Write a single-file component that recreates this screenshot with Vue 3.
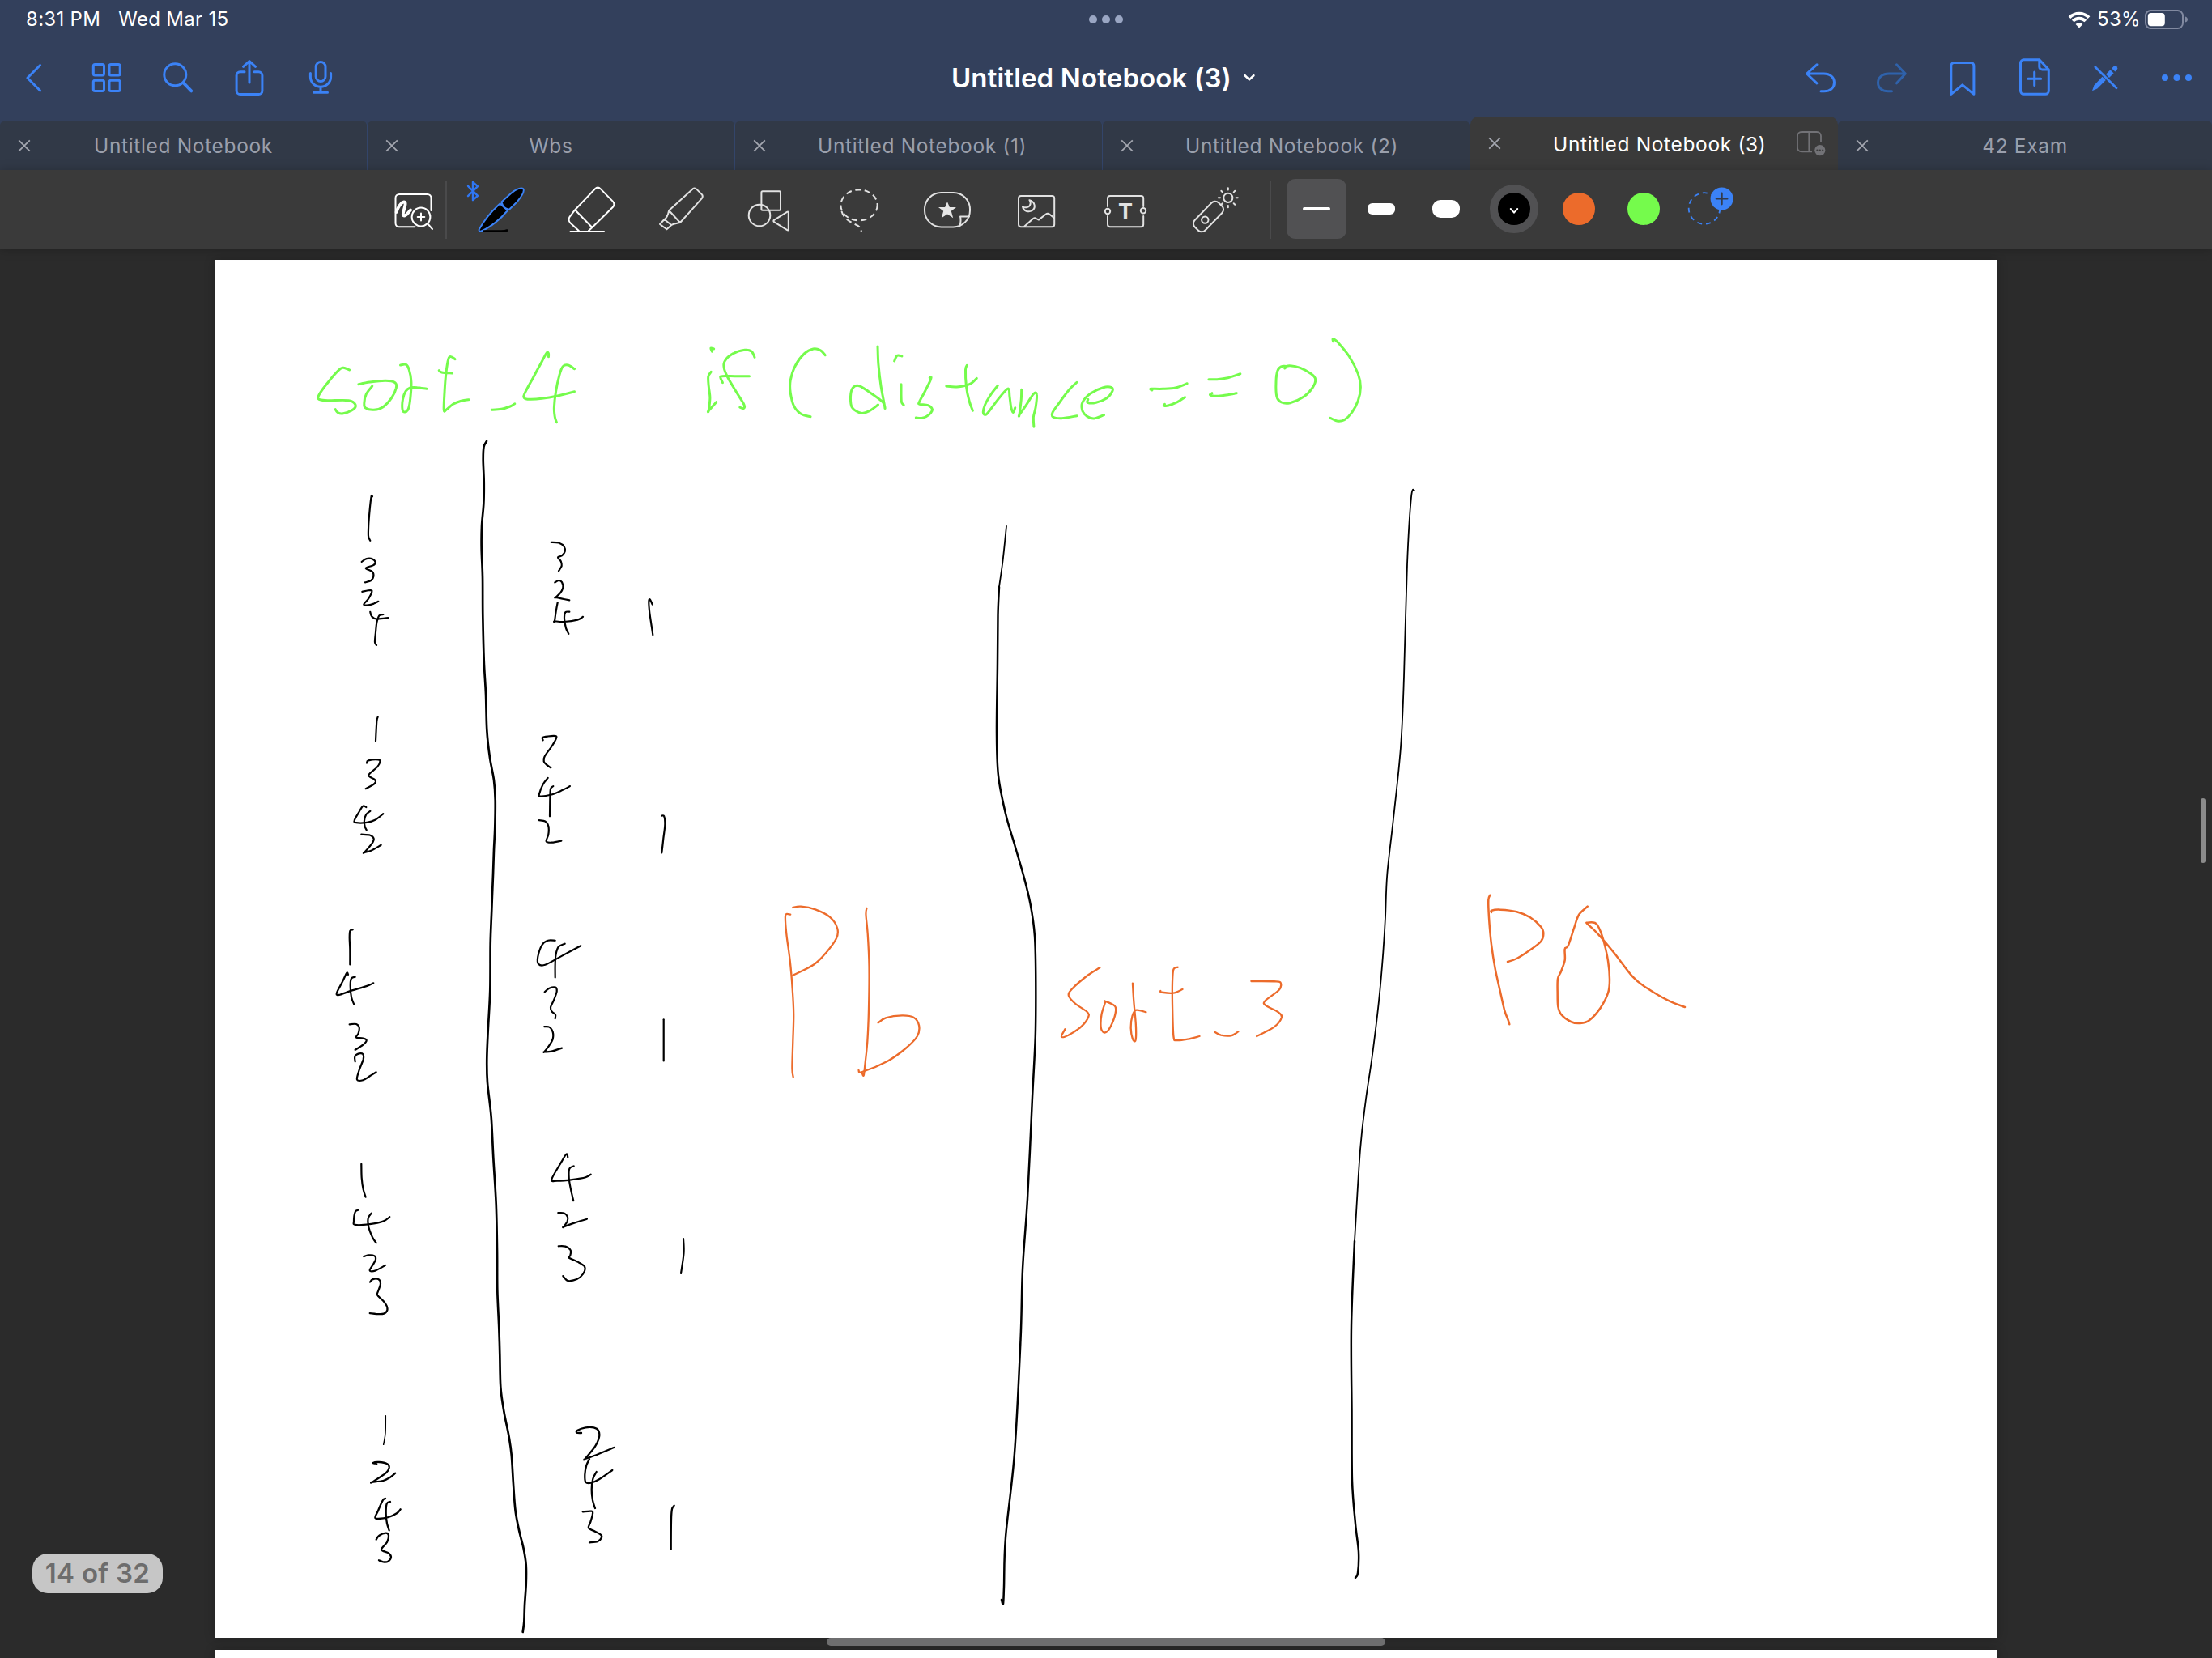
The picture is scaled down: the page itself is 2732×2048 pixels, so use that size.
<script setup>
const tabs = [
  { title: 'Untitled Notebook' },
  { title: 'Wbs' },
  { title: 'Untitled Notebook (1)' },
  { title: 'Untitled Notebook (2)' },
  { title: 'Untitled Notebook (3)', active: true },
  { title: '42 Exam' },
]

const GREEN = '#75fb4c'
const ORANGE = '#ec6b2b'
const BLACK = '#000000'

// Each ink group has its own origin and pen resolution (sx, sy units per page pixel).
const ink = [
  {
    x: 370, y: 400, sx: 2.306, sy: 3, color: GREEN, width: 3,
    strokes: [
      '142,171 125,163 113,170 82,215 56,262 55,280 80,284 140,284 159,300 152,318 122,333 108,328 102,317',
      '168,224 200,216 245,211 272,218 275,238 262,275 238,308 212,319 188,312 184,295 190,260 207,231',
      '287,153 303,151 312,170 318,215 316,270 310,315 300,327 293,318 294,280 302,250 315,237 335,236 362,241',
      '443,131 432,122 424,130 417,185 413,250 411,319 418,318 437,298 460,286 482,281',
      '397,173 405,180 435,183',
      '547,319 575,316 600,306 613,296',
      '709,122 709,110 704,107 690,140 665,200 641,258 640,275 655,280 690,277 735,267 783,251',
      '783,167 765,153 750,158 740,190 730,250 725,310 727,345 732,365',
      '1180,93 1171,90 1175,103',
      '1172,178 1164,195 1165,230 1169,275 1165,322 1165,322 1187,290',
      '1296,124 1287,102 1268,97 1235,110 1211,138 1209,165 1220,200 1245,255 1266,300 1264,314 1254,309',
      '1205,218 1199,200 1203,194 1240,194 1281,194',
      '1497,116 1483,98 1463,93 1438,110 1412,155 1398,210 1398,255 1408,305 1428,334 1455,344',
    ],
  },
  {
    x: 1030, y: 400, sx: 2.24, sy: 3, color: GREEN, width: 3,
    strokes: [
      '121,84 123,150 130,230 141,311 135,290 100,255 70,230 52,238 46,270 50,310 75,331 98,323 122,300',
      '167,138 175,118 188,120',
      '186,224 186,260 187,290 193,301',
      '265,200 269,197 266,212 250,255 236,290 237,298 260,302 272,318 262,338 245,349 227,348',
      '368,154 364,170 366,230 374,285 384,322',
      '311,231 340,234 375,224 395,202',
      '453,229 435,260 418,300 413,330 422,335 440,305 460,270 482,240 486,270 490,310 496,329 501,311',
      '519,244 518,280 513,337 513,337 530,305 552,260 561,262 558,310 552,345 553,382',
      '672,217 650,245 622,295 605,328 606,345 630,350 672,341',
      '703,280 702,292 725,292 755,275 770,250 768,236 745,236 710,258 688,290 687,320 700,343 720,351 747,338',
      '880,246 877,241 910,241 945,237 977,221',
      '915,298 913,303 925,303 950,290 971,272',
      '1037,206 1060,206 1090,200 1124,185',
      '1046,257 1041,264 1060,268 1085,264 1114,257',
      '1247,165 1252,158 1238,158 1227,175 1223,215 1225,270 1238,291 1262,293 1300,270 1325,235 1332,205 1320,185 1290,163 1262,155 1250,158',
      '1381,65 1381,56 1395,70 1425,120 1450,185 1457,235 1450,285 1432,330 1412,356 1392,360 1373,349',
    ],
  },
  {
    x: 380, y: 540, sx: 3, sy: 2.904, color: BLACK, width: 2.2,
    strokes: [
      '240,213 236,211 231,250 226,310 225,355 232,371',
      '200,447 218,436 240,437 251,450 242,460 215,470 240,483 244,500 235,514 213,521',
      '202,554 232,549 238,555 225,580 208,600 225,602 245,597 262,589',
      '232,627 237,642 255,652 298,648',
      '280,636 265,640 256,665 252,700 249,735 255,746',
      '902,377 930,379 950,392 953,410 942,425 927,431 938,445 941,462 930,480',
      '916,521 930,514 942,520 946,540 935,560 918,575 918,575 940,579 970,585',
      '926,593 920,625 915,660 915,660 950,662 1000,655 1020,644',
      '970,626 955,628 951,650 957,685 967,705',
      '1277,600 1268,582 1264,590 1267,630 1279,709',
      '260,1004 256,1020 252,1090',
      '219,1169 225,1160 262,1157 268,1165 258,1183 226,1212 248,1228 252,1237 240,1248 215,1261',
      '217,1327 205,1323 190,1345 173,1375 180,1383 220,1382 250,1373 280,1351',
      '232,1341 217,1353 210,1375 212,1397 218,1409',
      '199,1425 232,1428 245,1440 238,1458 210,1490 210,1490 235,1483 272,1463',
      '872,1087 870,1077 890,1073 918,1072 921,1080 905,1108 878,1145 875,1163 885,1175 901,1186',
      '890,1222 872,1245 858,1280 862,1288 900,1283 940,1268 972,1252',
      '910,1252 900,1262 898,1300 897,1360',
      '857,1374 880,1378 892,1395 892,1425 884,1450 905,1454 940,1448',
      '1312,1358 1321,1360 1324,1390 1318,1440 1312,1491',
    ],
  },
  {
    x: 380, y: 1080, sx: 3, sy: 2.8, color: BLACK, width: 2.2,
    strokes: [
      '167,191 157,196 155,220 157,260 157,312',
      '150,347 145,341 130,370 107,412 120,416 160,403 220,386 244,376',
      '176,355 162,360 158,385 162,425 172,450',
      '155,519 180,518 191,530 188,550 180,564 205,567 218,574 205,590 176,607',
      '176,648 175,630 190,620 205,622 206,640 190,680 183,710 205,712 230,698 254,684',
      '917,229 890,229 868,245 853,285 855,310 880,313 940,283 1012,247',
      '953,240 930,250 920,275 917,310 917,357',
      '878,407 895,394 918,391 923,405 912,435 900,460 905,475 918,485 917,499',
      '877,527 895,528 908,545 908,570 895,592 877,614 877,614 900,613 942,601',
      '1319,502 1319,645',
      '199,1002 200,1050 206,1090 215,1116',
      '188,1161 176,1168 171,1200 176,1212 230,1210 280,1200 304,1185',
      '236,1172 224,1190 226,1220 240,1255 254,1275',
      '208,1322 225,1317 248,1320 252,1332 242,1350 230,1370 250,1371 288,1352',
      '231,1410 240,1401 262,1400 270,1415 262,1440 258,1455 280,1475 295,1498 290,1515 270,1521 230,1518',
      '964,980 959,967 940,995 904,1055 925,1060 980,1056 1030,1048 1049,1038',
      '986,1009 970,1018 968,1050 975,1090 985,1129',
      '928,1171 950,1172 963,1185 962,1200 949,1219 949,1219 990,1205 1035,1192',
      '929,1286 955,1287 974,1300 973,1318 968,1326 1000,1340 1025,1355 1026,1372 1010,1393 985,1404 962,1405 946,1389',
    ],
  },
  {
    x: 380, y: 1640, sx: 3, sy: 3, color: BLACK, width: 2.3,
    strokes: [
      '256,504 242,501 265,498 295,505 302,518 290,538 240,572 240,572 280,567 305,555 325,539',
      '288,633 278,640 260,680 250,703 262,708 300,702 330,688 344,673',
      '306,645 293,652 290,690 294,725 302,751',
      '254,785 265,770 290,761 300,770 294,795 273,822 300,835 309,850 298,866 280,868 264,862',
      '1014,390 997,389 1000,380 1030,370 1060,370 1077,380 1080,405 1065,440 1028,486 1028,486 1060,475 1135,444',
      '1044,487 1033,510 1027,545 1030,572 1050,575 1080,562 1129,528',
      '1070,534 1057,560 1052,600 1056,640 1065,669',
      '1019,682 1052,680 1056,690 1048,720 1041,742 1065,755 1086,767 1089,778 1075,792 1044,796',
      '1358,659 1350,672 1347,710 1346,821',
    ],
  },
  {
    x: 380, y: 1640, sx: 3, sy: 3, color: BLACK, width: 1.5,
    strokes: ['289,326 288,390 281,433'],
  },
  {
    x: 940, y: 1080, sx: 2.24, sy: 3, color: ORANGE, width: 2.3,
    strokes: [
      '81,149 70,147 67,160 70,220 80,320 87,430 90,520 88,620 86,720 89,751',
      '88,123 110,119 150,130 190,158 211,200 208,238 180,290 145,335 88,374',
      '292,126 290,150 295,220 299,340 298,500 294,620 288,700 284,745 280,738',
      '324,550 345,532 390,523 422,530 437,560 432,600 400,645 350,692 280,732 270,726',
      '937,346 900,378 860,425 851,450 870,480 902,510 905,530 885,565 850,596 831,602 841,574',
      '950,469 978,487 981,510 972,550 958,582 946,584 940,565 942,520 952,475',
      '1028,404 1031,470 1037,560 1036,615 1028,610 1023,570 1027,525 1038,503 1065,511',
      '1153,344 1141,352 1138,400 1138,480 1141,600 1150,615 1180,611 1213,600',
      '1105,432 1108,437 1140,440 1166,426',
      '1256,585 1272,596 1300,598 1320,583',
      '1356,396 1425,397 1438,405 1432,430 1395,468 1395,485 1430,510 1440,530 1420,565 1371,600',
    ],
  },
  {
    x: 1640, y: 1080, sx: 3, sy: 3, color: ORANGE, width: 2.5,
    strokes: [
      '601,77 595,95 597,160 606,260 620,350 640,440 655,505 668,540 673,556',
      '606,141 607,134 640,131 700,139 750,160 790,195 799,220 790,248 750,280 700,312 666,324',
      '962,119 930,150 912,200 890,265 878,276 878,318 864,360 852,387 851,440 853,490 865,520 900,546 935,552 970,540 1010,495 1038,440 1044,390 1038,320 1020,240 1003,195 990,180 962,179 962,184 1000,220 1060,290 1130,380 1180,420 1260,467 1323,492',
    ],
  },
  {
    x: 0, y: 0, sx: 1, sy: 1, color: BLACK, width: 2.2,
    strokes: ['844,1530 844.5,1548 841,1573'],
  },
  {
    x: 0, y: 0, sx: 1, sy: 1, color: BLACK, width: 2.7,
    strokes: [
      '601,545 597.5,552 596.7,567.5 597.7,595 597.3,622.6 595,650 594.7,678 596,712 596.3,760 597.7,815.5 600,857 601.3,901.6 605,936 610,963.6 611.7,987.7 611.3,1022 610,1050 609,1080 607.3,1123 605.7,1166 605.3,1223 602.7,1273 601.3,1308.6 602,1337 606.7,1380 609.3,1430 612.7,1487 614,1544 614.3,1594 616.3,1640 617.3,1673 618.3,1713 622.3,1743 628.3,1773 631.7,1797 634,1833 636.7,1867 641.7,1893 646.7,1913 649.7,1933 649.7,1957 648,1983 647.3,2003 645.7,2016',
    ],
  },
  {
    x: 0, y: 0, sx: 1, sy: 1, color: BLACK, width: 2.5,
    strokes: [
      '1234,725 1232.5,760 1232,819 1231,906 1233,958 1242,1005 1253,1043 1263.7,1080 1272.6,1116.7 1278,1156.7 1279.3,1213 1278.8,1280 1274.8,1360 1269,1481 1263,1568 1260.5,1655 1253,1795 1242,1899 1240,1960 1239,1981 1237,1976',
      '1673,1533 1669,1638 1669.5,1742 1670,1829 1674,1882 1678,1917 1677,1943 1674,1949',
    ],
  },
  {
    x: 0, y: 0, sx: 1, sy: 1, color: BLACK, width: 1.8,
    strokes: [
      '1243,650 1241,670 1238,697 1234,725',
      '1747,606 1743,614 1738,697 1734,836 1730,923 1721,1011 1713.3,1080 1711,1133 1708.3,1176.7 1703,1236.7 1695,1303 1686.7,1360 1680,1420 1673,1533',
    ],
  },
]

// Smooths a list of sampled pen positions into a cubic curve.
function smooth(group, stroke) {
  const p = stroke.split(' ').map((pair) => {
    const [px, py] = pair.split(',').map(Number)
    return [group.x + px / group.sx, group.y + py / group.sy]
  })
  let d = `M${p[0][0].toFixed(1)} ${p[0][1].toFixed(1)}`
  for (let i = 0; i < p.length - 1; i++) {
    const a = p[i - 1] || p[i]
    const b = p[i]
    const c = p[i + 1]
    const e = p[i + 2] || c
    const pts = [
      b[0] + (c[0] - a[0]) / 6, b[1] + (c[1] - a[1]) / 6,
      c[0] - (e[0] - b[0]) / 6, c[1] - (e[1] - b[1]) / 6,
      c[0], c[1],
    ]
    d += ' C' + pts.map((n) => n.toFixed(1)).join(' ')
  }
  return d
}

const rays = [0, 45, 90, 135, 180, 225, 270, 315]
</script>

<template>
  <div class="app">
    <header class="top">
      <div class="status">
        <div class="clock"><span class="time">8:31 PM</span><span class="date">Wed Mar 15</span></div>
        <div class="multitask"><i></i><i></i><i></i></div>
        <div class="power">
          <svg class="wifi" viewBox="0 0 28 21">
            <path d="M2 7.6A17 17 0 0 1 26 7.6" />
            <path d="M6.2 12A11 11 0 0 1 21.8 12" />
            <path class="solid" d="M14 20.4L9.6 15.9A6.2 6.2 0 0 1 18.4 15.9Z" />
          </svg>
          <span class="pct">53%</span>
          <svg class="battery" viewBox="0 0 54 24">
            <rect x="1" y="1" width="46" height="22" rx="6.5" fill="none" stroke="#8189a0" stroke-width="2" />
            <rect x="3.8" y="4" width="21" height="16.3" rx="4" fill="#fff" />
            <path d="M50 8.5V15.5C52 15 53 13.5 53 12S52 9 50 8.5Z" fill="#8189a0" />
          </svg>
        </div>
      </div>

      <div class="nav">
        <div class="group">
          <svg viewBox="0 52 88 88"><path d="M49.6 80.5L33.9 96.3L49.6 112" /></svg>
          <svg viewBox="88 52 88 88">
            <rect x="115.3" y="79.5" width="13.2" height="13.4" rx="2" />
            <rect x="135" y="79.5" width="13.2" height="13.4" rx="2" />
            <rect x="115.3" y="99.2" width="13.2" height="13.4" rx="2" />
            <rect x="135" y="99.2" width="13.2" height="13.4" rx="2" />
          </svg>
          <svg viewBox="176 52 88 88">
            <circle cx="216.3" cy="92.3" r="13.5" /><path class="bold" d="M226.6 102.4L236.3 112.4" />
          </svg>
          <svg viewBox="264 52 88 88">
            <path d="M302 88.8H296.5a4.4 4.4 0 0 0-4.4 4.4V112.2a4.4 4.4 0 0 0 4.4 4.4H319.5a4.4 4.4 0 0 0 4.4-4.4V93.2a4.4 4.4 0 0 0-4.4-4.4H314" />
            <path d="M308 102V76.2M300.5 82.3L308 75.5L315.5 82.3" />
          </svg>
          <svg viewBox="352 52 88 88">
            <rect x="390.2" y="76.5" width="11.8" height="24" rx="5.9" />
            <path d="M383.4 90.5V95a12.6 12.3 0 0 0 25.2 0V90.5M396 107.5V114M387.5 114.3H404.5" />
          </svg>
        </div>
        <div class="title">
          <span>Untitled Notebook (3)</span>
          <svg viewBox="0 0 16 10"><path d="M2.6 2.2L8 7.4L13.4 2.2" /></svg>
        </div>
        <div class="group">
          <svg viewBox="2204 52 88 88">
            <path d="M2244 79.8L2231.5 91L2244 102.8M2232 91H2252.5C2260.5 91 2265.5 95.5 2265.5 102S2260.5 112.8 2253 112.8H2249" />
          </svg>
          <svg class="dim" viewBox="2292 52 88 88">
            <path d="M2342.5 79.8L2353.3 91L2342.5 102.8M2353 91H2333C2325 91 2319.5 95.5 2319.5 102S2324.5 112.8 2332 112.8H2336.5" />
          </svg>
          <svg viewBox="2380 52 88 88">
            <path d="M2409.8 116.3V81a3.6 3.6 0 0 1 3.6-3.6H2434.3a3.6 3.6 0 0 1 3.6 3.6V116.3L2423.8 104.8Z" />
          </svg>
          <svg viewBox="2468 52 88 88">
            <path d="M2518.8 73.8H2499.5a4 4 0 0 0-4 4V112.3a4 4 0 0 0 4 4H2526.3a4 4 0 0 0 4-4V86ZM2518.8 74V82.5a3.6 3.6 0 0 0 3.6 3.6H2530M2512.7 89V105.5M2504.7 97.2H2520.7" />
          </svg>
          <svg viewBox="2556 52 88 88">
            <path class="thin" d="M2587.8 82.8L2614 108.8" />
            <path class="solid" d="M2584 112.2L2586.3 105.6L2596.5 94.8L2600.8 99.1L2590.3 109.6Z" />
            <path class="solid" d="M2601 91.8L2606.4 86.2L2610.6 90.4L2605 96Z" />
            <path class="solid" d="M2608.2 84.4L2610.5 82A3 3 0 0 1 2614.7 86.2L2612.4 88.6Z" />
          </svg>
          <svg viewBox="2644 52 88 88">
            <g class="solid"><circle cx="2674" cy="96" r="4" /><circle cx="2688.5" cy="96" r="4" /><circle cx="2703" cy="96" r="4" /></g>
          </svg>
        </div>
      </div>

      <div class="tabs">
        <div v-for="tab in tabs" :key="tab.title" class="tab" :class="{ active: tab.active }">
          <svg class="close" viewBox="0 0 16 16"><path d="M1.2 1.4L14.8 14.6M14.8 1.4L1.2 14.6" /></svg>
          <span class="label">{{ tab.title }}</span>
          <svg v-if="tab.active" class="split" viewBox="0 0 36 31">
            <path d="M19 25.3H6a5 5 0 0 1-5-5V6a5 5 0 0 1 5-5H25a5 5 0 0 1 5 5V13.5M15.3 1V25.3" fill="none" stroke="#727276" stroke-width="1.8" />
            <circle cx="28.8" cy="23.6" r="6.6" fill="#727276" />
            <g fill="#3a3a3a"><circle cx="25.4" cy="23.6" r="1.1" /><circle cx="28.8" cy="23.6" r="1.1" /><circle cx="32.2" cy="23.6" r="1.1" /></g>
          </svg>
        </div>
      </div>
    </header>

    <div class="toolbar">
      <svg class="zoom" viewBox="455 210 95 97">
        <path d="M512.5 280.3H493a4.5 4.5 0 0 1-4.5-4.5V244.5a4.5 4.5 0 0 1 4.5-4.5H528a4.5 4.5 0 0 1 4.5 4.5V260" />
        <path class="scribble" d="M489.6 262C491.5 256 495.5 249.5 499 249.3C503.5 249.5 497 262 497.8 265.5C499 269 503 264 507 259.5" />
        <circle cx="520" cy="268" r="11.4" /><path d="M528.3 276.3L534 283M515.7 268H524.3M520 263.6V272.4" />
      </svg>
      <div class="rule first"></div>
      <svg viewBox="565 210 110 97">
        <path class="bt" d="M578 229.8L590 241.8L584 247.2V224.8L590 230.2L578 242.2" />
        <path class="pen" d="M617.5 251.5C607 261 598 272 591.8 283.2C591 285.8 593 286.3 595.5 285C605 281 618 271 627 260Z" />
        <path class="pen" d="M619.4 249.5L631 239C638 233 644 231.4 646.3 233.2C648 236 644 243 638.5 249.5L629 258.7C623.5 258.2 620.5 254 619.4 249.5Z" />
        <path class="penline" d="M597.5 285.7H619Q624 285.7 626.3 284.6" />
      </svg>
      <svg class="white" viewBox="675 210 110 97">
        <path d="M710.2 259.2L735 233.2Q738.4 230 741.8 233.4L756.8 248.6Q760 252.2 757 255.8L731.4 281ZM710.2 259.2L703.6 267.8Q701.3 271.5 704 275L714.8 285M731.4 281L727 285M704.5 286H746" />
      </svg>
      <svg viewBox="785 210 110 97">
        <path d="M826.2 260L855.5 233.4Q858 231.4 860.5 233.9L867 240.4Q868.6 242.6 866.8 245.2L840 275ZM826.2 260C825.2 265 824 269 820.5 271L815 277L823.5 283.3L829.3 278C832 276 836 276 840 275M820.5 271L829.3 278" />
      </svg>
      <svg viewBox="895 210 110 97">
        <rect x="940.4" y="236.2" width="23.6" height="23.6" rx="1.5" /><circle cx="938" cy="266" r="13.3" />
        <path d="M955.6 273Q955 272.5 956 271.8L972 261.8Q973.8 261 973.8 262.6V283.4Q973.8 285 972.2 284.2L956 274.2Q955 273.5 955.6 273Z" />
      </svg>
      <svg viewBox="1005 210 110 97">
        <g class="dash">
          <ellipse cx="1061" cy="253.4" rx="22.6" ry="19" />
          <path d="M1039.5 261C1042 270 1050 274 1057 277.5C1061.5 279.5 1063.5 282 1063.8 286" />
        </g>
      </svg>
      <svg viewBox="1115 210 110 97">
        <rect x="1142" y="238" width="56" height="42.4" rx="20.5" />
        <path d="M1185.5 279C1186.5 275 1187 271 1186 267.4H1197" />
        <path class="fill" d="M1170 249.3L1172.9 256H1181L1174.8 260.8L1177.2 269.2L1170 264.5L1162.8 269.2L1165.2 260.8L1159 256H1167.1Z" />
      </svg>
      <svg viewBox="1225 210 110 97">
        <rect x="1258" y="242" width="44.2" height="38.2" rx="3" />
        <path d="M1271.5 247.2C1278.5 249 1279.5 257 1275 260C1270 263 1264 260.5 1263 255.3C1266 257 1270 256.5 1271.7 254C1273 252 1273 249.5 1271.5 247.2ZM1265.4 279.4L1276 270Q1278 268.6 1280 270L1282.8 271.6L1291.5 264.8Q1294 262.8 1296.4 264.8L1302 269.3" />
      </svg>
      <svg viewBox="1335 210 110 97">
        <path d="M1368 255V245a3 3 0 0 1 3-3H1409.2a3 3 0 0 1 3 3V255M1368 267V277.2a3 3 0 0 0 3 3H1409.2a3 3 0 0 0 3-3V267" />
        <circle cx="1368" cy="261" r="3.2" /><circle cx="1412" cy="260.2" r="3.2" />
        <text x="1390" y="270.8" text-anchor="middle">T</text>
      </svg>
      <svg viewBox="1445 210 110 97">
        <rect x="-21" y="-9" width="42" height="18" rx="6" transform="translate(1492.5 267.5) rotate(-46)" />
        <circle cx="1488.3" cy="271.6" r="4.2" /><circle cx="1516.8" cy="244.3" r="5.6" />
        <path v-for="r in rays" :key="r" d="M0 -9.8V-12" :transform="`translate(1516.8 244.3) rotate(${r})`" />
      </svg>
      <div class="rule second"></div>

      <div class="pens">
        <div class="cell selected"><i class="nib thin-nib"></i></div>
        <div class="cell"><i class="nib mid-nib"></i></div>
        <div class="cell"><i class="nib fat-nib"></i></div>
      </div>
      <div class="swatches">
        <div class="cell">
          <div class="ring"><div class="dot black"><svg viewBox="0 0 12 9"><path d="M1.8 2L6 6.6L10.2 2" /></svg></div></div>
        </div>
        <div class="cell"><div class="dot orange"></div></div>
        <div class="cell"><div class="dot green"></div></div>
        <svg class="add" viewBox="2070 210 80 97">
          <circle cx="2105" cy="257.5" r="19.3" fill="none" stroke="#3b82f6" stroke-width="1.8" stroke-dasharray="6 5.02" />
          <circle cx="2126.6" cy="245.5" r="14" fill="#3b82f6" />
          <path d="M2126.6 238.7V252.3M2119.8 245.5H2133.4" stroke="#333b4a" stroke-width="2.2" fill="none" stroke-linecap="round" />
        </svg>
      </div>
    </div>

    <main class="desk">
      <svg class="page" viewBox="265 321 2202 1702">
        <g v-for="(group, g) in ink" :key="g" class="ink" :stroke="group.color" :stroke-width="group.width">
          <path v-for="(stroke, s) in group.strokes" :key="s" :d="smooth(group, stroke)" />
        </g>
      </svg>
      <div class="page next"></div>
      <div class="counter">14 of 32</div>
      <div class="vbar"></div>
      <div class="home"></div>
    </main>
  </div>
</template>

<style>
body {
  background: #2b2b2b;
  overflow: hidden;
}
</style>

<style scoped>
.app {
  display: flex;
  flex-direction: column;
  width: 2732px;
  height: 2048px;
  overflow: hidden;
  background: #2b2b2b;
  color: #fff;
  font-family: Inter, "Liberation Sans", sans-serif;
}
svg {
  display: block;
  flex: none;
}
.top {
  display: flex;
  flex-direction: column;
  height: 210px;
  background: #33405c;
}
.status {
  display: grid;
  grid-template-columns: 1fr auto 1fr;
  align-items: center;
  height: 48px;
  padding: 0 29px;
  font-size: 24px;
  line-height: 48px;
  letter-spacing: 0.3px;
}
.clock {
  display: flex;
  gap: 22px;
  padding-left: 3px;
}
.multitask {
  display: flex;
  gap: 6px;
}
.multitask i {
  width: 10px;
  height: 10px;
  border-radius: 50%;
  background: #9aa6c3;
}
.power {
  display: flex;
  align-items: center;
  justify-content: flex-end;
}
.wifi {
  width: 28px;
  height: 21px;
  margin-right: 8px;
  fill: none;
  stroke: #fff;
  stroke-width: 3.8;
}
.wifi .solid {
  fill: #fff;
  stroke: none;
}
.pct {
  margin-right: 5px;
}
.battery {
  width: 54px;
  height: 24px;
}
.nav {
  display: grid;
  grid-template-columns: 1fr auto 1fr;
  align-items: center;
  height: 96px;
}
.group {
  display: flex;
}
.group:last-child {
  justify-content: flex-end;
}
.group svg {
  width: 88px;
  height: 88px;
  fill: none;
  stroke: #3b82f6;
  stroke-width: 3;
  stroke-linecap: round;
  stroke-linejoin: round;
}
.group .bold {
  stroke-width: 3.8;
}
.group .thin {
  stroke-width: 2.8;
}
.group .solid {
  fill: #3b82f6;
  stroke: none;
}
.group svg.dim {
  stroke: #2f62ab;
}
.title {
  display: flex;
  align-items: center;
  gap: 14px;
  margin-right: 6px;
  font-size: 33px;
  font-weight: 600;
  line-height: 40px;
  letter-spacing: 0.15px;
}
.title svg {
  width: 16px;
  height: 10px;
  fill: none;
  stroke: #fff;
  stroke-width: 2.6;
  stroke-linecap: round;
  stroke-linejoin: round;
}
.tabs {
  display: flex;
  align-items: flex-end;
  height: 66px;
}
.tab {
  position: relative;
  display: flex;
  align-items: center;
  justify-content: safe center;
  box-sizing: border-box;
  width: 454px;
  height: 60px;
  padding: 0 102px;
  border-right: 1px solid #33456a;
  border-radius: 5px 5px 0 0;
  background: #313947;
  color: #9a9fac;
  font-size: 24.5px;
  line-height: 30px;
  letter-spacing: 0.65px;
  white-space: nowrap;
}
.tab:last-child {
  flex: 1;
  border-right: 0;
}
.tab.active {
  height: 66px;
  border-right: 0;
  border-radius: 10px 10px 0 0;
  background: #3a3a3a;
  color: #fff;
}
.label {
  flex: none;
}
.active .label {
  padding-top: 2px;
}
.close {
  position: absolute;
  left: 22px;
  top: 50%;
  width: 16px;
  height: 16px;
  margin-top: -8px;
  fill: none;
  stroke: #a4a7b0;
  stroke-width: 1.8;
}
.split {
  position: absolute;
  right: 15px;
  top: 18px;
  width: 36px;
  height: 31px;
}
.toolbar {
  position: relative;
  z-index: 2;
  display: flex;
  align-items: center;
  height: 97px;
  padding-left: 455px;
  background: #3a3a3a;
  box-shadow: 0 1px 12px rgba(0, 0, 0, 0.25);
}
.toolbar > svg {
  width: 110px;
  height: 97px;
  fill: none;
  stroke: #e2e2e2;
  stroke-width: 2;
  stroke-linecap: round;
  stroke-linejoin: round;
}
.toolbar > svg.zoom {
  width: 95px;
  stroke: #fff;
}
.toolbar > svg.white {
  stroke: #fff;
}
.toolbar .scribble {
  stroke-width: 3.8;
}
.toolbar .bt {
  stroke: #2f76f2;
  stroke-width: 2.4;
}
.toolbar .pen {
  fill: #000;
  stroke: #3b82f6;
}
.toolbar .penline {
  stroke: #000;
  stroke-width: 2.8;
}
.toolbar .dash {
  stroke-dasharray: 7 4.6;
  stroke-linecap: butt;
}
.toolbar .fill {
  fill: #e6e6e6;
  stroke: none;
}
.toolbar text {
  fill: #e2e2e2;
  stroke: none;
  font-size: 27px;
  font-weight: 700;
}
.rule {
  flex: none;
  width: 2px;
  height: 72px;
  background: #4a4a4b;
}
.rule.first {
  margin-right: 13px;
}
.rule.second {
  margin: 0 16px 0 13px;
}
.pens,
.swatches {
  display: flex;
  align-items: center;
  margin-bottom: 1px;
}
.swatches {
  margin-left: 4px;
}
.cell {
  display: flex;
  align-items: center;
  justify-content: center;
  width: 80px;
  height: 74px;
}
.cell.selected {
  width: 74px;
  margin: 0 3px;
  border-radius: 11px;
  background: #515153;
}
.nib {
  width: 34px;
  background: #fff;
}
.thin-nib {
  height: 4px;
  border-radius: 2px;
}
.mid-nib {
  height: 14px;
  border-radius: 6px;
}
.fat-nib {
  height: 22px;
  border-radius: 10px;
}
.ring {
  display: flex;
  align-items: center;
  justify-content: center;
  width: 60px;
  height: 60px;
  border-radius: 50%;
  background: #515153;
}
.dot {
  display: flex;
  align-items: center;
  justify-content: center;
  width: 40px;
  height: 40px;
  border-radius: 50%;
}
.dot.black {
  background: #000;
}
.dot.orange {
  background: #ec6b2b;
}
.dot.green {
  background: #75fb4c;
}
.dot svg {
  width: 12px;
  height: 9px;
  margin-top: 4px;
  fill: none;
  stroke: #fff;
  stroke-width: 2;
  stroke-linecap: round;
}
.add {
  width: 80px;
  height: 97px;
}
.desk {
  position: relative;
  display: flex;
  flex-direction: column;
  align-items: center;
  gap: 15px;
  height: 1741px;
  padding-top: 14px;
  box-sizing: border-box;
  overflow: hidden;
}
.page {
  flex: none;
  width: 2202px;
  height: 1702px;
  background: #fff;
  box-shadow: 0 0 12px rgba(0, 0, 0, 0.22);
}
.ink {
  fill: none;
  stroke-linecap: round;
  stroke-linejoin: round;
}
.counter {
  position: absolute;
  left: 40px;
  bottom: 80px;
  width: 161px;
  height: 49px;
  border-radius: 19px;
  background: #c6c6c6;
  color: #6d6d6d;
  font-size: 33px;
  font-weight: 600;
  line-height: 49px;
  letter-spacing: 0.3px;
  text-align: center;
}
.vbar {
  position: absolute;
  right: 8px;
  top: 679px;
  width: 6px;
  height: 80px;
  border-radius: 3px;
  background: #8b8b8b;
}
.home {
  position: absolute;
  left: 1021px;
  bottom: 15px;
  width: 690px;
  height: 10px;
  border-radius: 5px;
  background: #6e6e6f;
}
</style>
